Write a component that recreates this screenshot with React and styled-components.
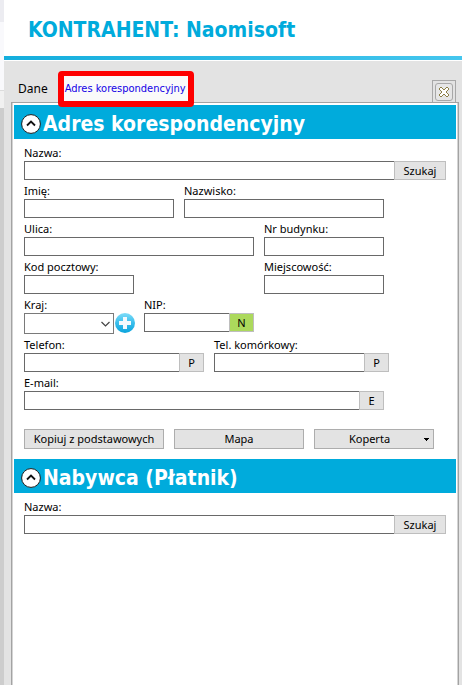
import React from 'react'
import styled, { createGlobalStyle } from 'styled-components'

const GlobalStyle = createGlobalStyle`
  * {
    box-sizing: border-box;
  }

  body {
    margin: 0;
    background: #fff;
    color: #000;
    font-family: "Noto Sans", "Open Sans", sans-serif;
    font-size: 11px;
  }

  button, input, select {
    margin: 0;
    padding: 0;
    border-radius: 0;
    font-family: inherit;
    color: inherit;
  }
`

const Page = styled.div`
  display: flex;
  min-height: 100vh;
`

const Edge = styled.div`
  flex: 0 0 4px;
  background: linear-gradient(
    #ececf1 0 22px,
    #f9f9fc 22px 90px,
    #dcdcdc 90px 91px,
    #f1f1f1 91px 108px,
    #cdcdcd 108px
  );
`

const Window = styled.main`
  flex: 1;
  min-width: 0;
  display: flex;
  flex-direction: column;
  background: #e3e3e3;
`

const Header = styled.header`
  height: 61px;
  padding: 0 24px;
  background:
    linear-gradient(90deg, #14aedd, #45c6ee) 0 56px / 100% 4px no-repeat,
    #fff;
`

const Title = styled.h1`
  margin: 0;
  padding-top: 15px;
  color: #00abdc;
  font-family: "DejaVu Sans Condensed", "DejaVu Sans", sans-serif;
  font-size: 21px;
  line-height: 30px;
  font-weight: 700;
  white-space: nowrap;
`

const Tabs = styled.nav`
  display: flex;
  align-items: flex-start;
  height: 41px;
  padding: 10px 6px 0 14px;
`

const Tab = styled.button`
  height: 34px;
  border: 0;
  background: none;
  font-size: 12px;
  white-space: nowrap;
`

const MarkedTab = styled(Tab)`
  position: relative;
  z-index: 1;
  width: 136px;
  height: 36px;
  margin-left: 10px;
  padding: 0 0 0 1px;
  border: 6px solid #fe0000;
  border-top-width: 5px;
  border-radius: 4px;
  background: #fafafa;
  color: #1400e6;
  font-family: "DejaVu Sans Condensed", "DejaVu Sans", sans-serif;
  font-size: 11px;
  text-align: left;
`

const CloseTab = styled.div`
  width: 24px;
  height: 22px;
  margin: 9px 0 0 auto;
  padding: 2px;
  border: 1px solid #a8a8a8;
  border-bottom: 0;
`

const CloseButton = styled.button`
  display: grid;
  place-items: center;
  width: 18px;
  height: 18px;
  border: 1px solid #a8a8a8;
  border-radius: 3px;
  background: #e6e6e6;
`

const Panel = styled.div`
  flex: 1;
  margin: 0 3px 0 7px;
  padding: 2px 1px 0;
  border: 1px solid #a3a3a3;
  border-bottom: 0;
  box-shadow: inset -1px 0 #d4d4d4, inset 1px 0 #d4d4d4;
  background: #fff;
`

const Banner = styled.div`
  display: flex;
  align-items: center;
  height: 34px;
  padding: 3px 7px 0;
  gap: 2px;
  margin: 0 1px;
  background: #00abdc;
`

const BannerTitle = styled.h2`
  margin: 0;
  color: #fff;
  font-family: "DejaVu Sans Condensed", "DejaVu Sans", sans-serif;
  font-size: 21px;
  line-height: 30px;
  font-weight: 700;
  white-space: nowrap;
`

const Toggle = styled.button`
  flex: none;
  display: block;
  width: 20px;
  height: 20px;
  border: 0;
  background: none;

  svg {
    display: block;
  }
`

const Form = styled.form`
  padding: 3px 11px 0;
`

const Row = styled.div`
  display: flex;
  align-items: flex-start;
  gap: 10px;
`

const FieldBox = styled.div`
  flex: ${props => (props.$width ? `0 1 ${props.$width}px` : '1')};
  min-width: 0;
  margin-left: ${props => (props.$push ? '120px' : '0')};
`

const Label = styled.label`
  display: block;
  padding: 4px 0 1px;
  line-height: 14px;
  white-space: nowrap;
`

const Controls = styled.div`
  display: flex;
  align-items: flex-start;
`

const Input = styled.input`
  flex: 1;
  min-width: 0;
  width: 100%;
  height: 19px;
  padding: 0 4px;
  border: 1px solid #696969;
  background: #fff;
  font-size: 11px;
  outline: none;
`

const InlineButton = styled.button`
  flex: none;
  width: ${props => (props.$wide ? '52px' : '25px')};
  height: 19px;
  margin-left: -1px;
  border: 1px solid #bebebe;
  background: ${props => (props.$green ? '#acd95c' : '#e3e3e3')};
  font-size: 11px;
  line-height: 16px;
`

const SelectBox = styled.div`
  display: grid;
  flex: 1;
  align-items: center;

  select, svg {
    grid-area: 1 / 1;
  }

  svg {
    justify-self: end;
    margin-right: 4px;
    pointer-events: none;
  }
`

const Select = styled.select`
  appearance: none;
  width: 100%;
  height: 21px;
  padding: 0 20px 0 4px;
  border: 1px solid #7a7a7a;
  background: #fff;
  font-size: 11px;
`

const AddButton = styled.button`
  flex: none;
  width: 20px;
  height: 20px;
  border: 0;
  background: none;

  svg {
    display: block;
  }
`

const CountryControls = styled(Controls)`
  gap: 1px;
  margin-right: -1px;
`

const Actions = styled.div`
  display: flex;
  gap: 10px;
  margin: 19px 0 10px;
`

const Action = styled.button`
  display: flex;
  align-items: center;
  flex: 0 1 ${props => props.$width}px;
  height: 20px;
  border: 1px solid #adadad;
  background: #e3e3e3;
  font-size: 11px;
  line-height: 18px;
  white-space: nowrap;

  span {
    flex: 1;
    text-align: center;
  }

  svg {
    flex: none;
    margin-right: 4px;
  }
`

const CloseIcon = () => (
  <svg width="10" height="10" viewBox="0 0 10 10" shapeRendering="crispEdges">
    <path d="M1 1h2v1h1v1h2V2h1V1h2v2H8v1H7v2h1v1h1v2H7V8H6V7H4v1H3v1H1V7h1V6h1V4H2V3H1z" fill="#fff" />
    <path
      d="M1 0h2v1H1zM7 0h2v1H7zM0 1h1v2H0zM9 1h1v2H9zM3 1h1v1H3zM6 1h1v1H6zM4 2h2v1H4zM1 3h1v1H1zM8 3h1v1H8zM2 4h1v2H2zM7 4h1v2H7zM1 6h1v1H1zM8 6h1v1H8zM4 7h2v1H4zM0 7h1v2H0zM9 7h1v2H9zM3 8h1v1H3zM6 8h1v1H6zM1 9h2v1H1zM7 9h2v1H7z"
      fill="#8b7f45"
    />
  </svg>
)

const CollapseIcon = () => (
  <svg width="20" height="20" viewBox="0 0 20 20">
    <circle cx="10" cy="10" r="9.4" fill="#fff" stroke="#1c1c1c" />
    <path d="M6 11.500l4-4 4 4" fill="none" stroke="#111" strokeWidth="1.800" />
  </svg>
)

const PlusIcon = () => (
  <svg width="20" height="20" viewBox="0 0 20 20">
    <defs>
      <linearGradient id="plus" x1="0" y1="0" x2="0" y2="1">
        <stop offset="0" stopColor="#7fdcf8" />
        <stop offset=".45" stopColor="#3fc1ee" />
        <stop offset="1" stopColor="#0ba4dc" />
      </linearGradient>
    </defs>
    <circle cx="10" cy="10" r="10" fill="url(#plus)" />
    <path d="M8 4h4v4h4v4h-4v4H8v-4H4V8h4z" fill="#f4fafd" />
  </svg>
)

const ChevronIcon = () => (
  <svg width="9" height="6" viewBox="0 0 9 6">
    <path d="M.5 1l4 4 4-4" fill="none" stroke="#444" strokeWidth="1.2" />
  </svg>
)

const CaretIcon = () => (
  <svg width="5" height="3" viewBox="0 0 5 3">
    <path d="M0 0h5v1H4v1H3v1H2V2H1V1H0z" fill="#000" />
  </svg>
)

const Field = ({ id, label, width, push, button, green }) => (
  <FieldBox $width={width} $push={push}>
    <Label htmlFor={id}>{label}</Label>
    <Controls>
      <Input id={id} type="text" />
      {button && (
        <InlineButton type="button" $wide={button.length > 1} $green={green}>{button}</InlineButton>
      )}
    </Controls>
  </FieldBox>
)

const SectionBanner = ({ title }) => (
  <Banner>
    <Toggle type="button" aria-label="Zwiń"><CollapseIcon /></Toggle>
    <BannerTitle>{title}</BannerTitle>
  </Banner>
)

const App = () => (
  <Page>
    <GlobalStyle />
    <Edge />
    <Window>
      <Header>
        <Title>KONTRAHENT: Naomisoft</Title>
      </Header>
      <Tabs>
        <Tab type="button">Dane</Tab>
        <MarkedTab type="button">Adres korespondencyjny</MarkedTab>
        <CloseTab>
          <CloseButton type="button" aria-label="Zamknij"><CloseIcon /></CloseButton>
        </CloseTab>
      </Tabs>
      <Panel>
        <SectionBanner title="Adres korespondencyjny" />
        <Form>
          <Row>
            <Field id="nazwa" label="Nazwa:" button="Szukaj" />
          </Row>
          <Row>
            <Field id="imie" label="Imię:" width={150} />
            <Field id="nazwisko" label="Nazwisko:" width={200} />
          </Row>
          <Row>
            <Field id="ulica" label="Ulica:" width={230} />
            <Field id="budynek" label="Nr budynku:" width={120} />
          </Row>
          <Row>
            <Field id="kod" label="Kod pocztowy:" width={110} />
            <Field id="miejscowosc" label="Miejscowość:" width={120} push />
          </Row>
          <Row>
            <FieldBox $width={110}>
              <Label htmlFor="kraj">Kraj:</Label>
              <CountryControls>
                <SelectBox>
                  <Select id="kraj" />
                  <ChevronIcon />
                </SelectBox>
                <AddButton type="button" aria-label="Dodaj kraj"><PlusIcon /></AddButton>
              </CountryControls>
            </FieldBox>
            <Field id="nip" label="NIP:" width={110} button="N" green />
          </Row>
          <Row>
            <Field id="telefon" label="Telefon:" width={180} button="P" />
            <Field id="komorka" label="Tel. komórkowy:" width={175} button="P" />
          </Row>
          <Row>
            <Field id="email" label="E-mail:" width={360} button="E" />
          </Row>
          <Actions>
            <Action type="button" $width={140}><span>Kopiuj z podstawowych</span></Action>
            <Action type="button" $width={130}><span>Mapa</span></Action>
            <Action type="button" $width={120}><span>Koperta</span><CaretIcon /></Action>
          </Actions>
        </Form>
        <SectionBanner title="Nabywca (Płatnik)" />
        <Form>
          <Row>
            <Field id="nabywca" label="Nazwa:" button="Szukaj" />
          </Row>
        </Form>
      </Panel>
    </Window>
  </Page>
)

export default App
